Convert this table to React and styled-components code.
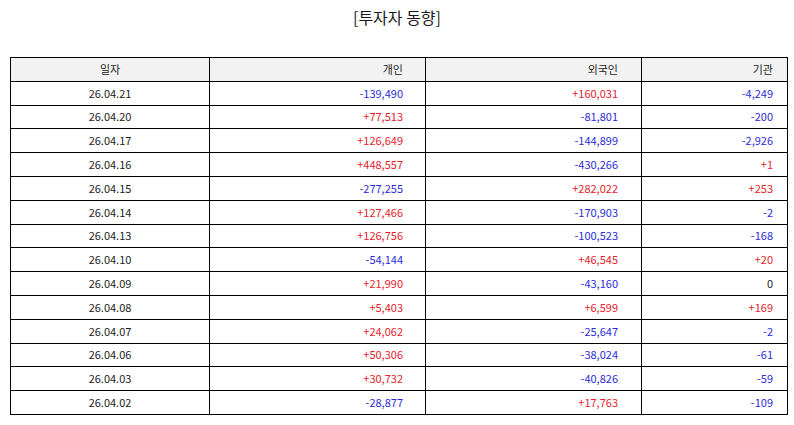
import React from 'react'
import styled, {createGlobalStyle} from 'styled-components';

const rows = [
    ['26.04.21', '-139,490', '+160,031', '-4,249'],
    ['26.04.20', '+77,513', '-81,801', '-200'],
    ['26.04.17', '+126,649', '-144,899', '-2,926'],
    ['26.04.16', '+448,557', '-430,266', '+1'],
    ['26.04.15', '-277,255', '+282,022', '+253'],
    ['26.04.14', '+127,466', '-170,903', '-2'],
    ['26.04.13', '+126,756', '-100,523', '-168'],
    ['26.04.10', '-54,144', '+46,545', '+20'],
    ['26.04.09', '+21,990', '-43,160', '0'],
    ['26.04.08', '+5,403', '+6,599', '+169'],
    ['26.04.07', '+24,062', '-25,647', '-2'],
    ['26.04.06', '+50,306', '-38,024', '-61'],
    ['26.04.03', '+30,732', '-40,826', '-59'],
    ['26.04.02', '-28,877', '+17,763', '-109'],
];

const columns = [
    {label: '일자', width: 199, align: 'center', pad: 0},
    {label: '개인', width: 216, align: 'right', pad: 22},
    {label: '외국인', width: 216, align: 'right', pad: 23},
    {label: '기관', width: 146, align: 'right', pad: 14},
];

const toneOf = (value) => {
    if (value.startsWith('+')) return 'up';
    if (value.startsWith('-')) return 'down';
    return 'flat';
};

const App = () => {
    return (
        <Page>
            <GlobalStyle/>
            <Title>[투자자 동향]</Title>
            <Table>
                <colgroup>
                    {columns.map((col) => <col key={col.label} style={{width: col.width}}/>)}
                </colgroup>
                <thead>
                <Row>
                    {columns.map((col) => (
                        <HeadCell key={col.label} $align={col.align} $pad={col.pad}>{col.label}</HeadCell>
                    ))}
                </Row>
                </thead>
                <tbody>
                {rows.map((row) => (
                    <Row key={row[0]}>
                        {row.map((value, i) => (
                            <Cell
                                key={i}
                                $align={columns[i].align}
                                $pad={columns[i].pad}
                                $tone={i === 0 ? 'flat' : toneOf(value)}>
                                {value}
                            </Cell>
                        ))}
                    </Row>
                ))}
                </tbody>
            </Table>
        </Page>
    )
}

const GlobalStyle = createGlobalStyle`
  html, body {
    margin: 0;
    background: #fff;
  }

  body {
    font-family: "Noto Sans CJK KR", "Noto Sans", sans-serif;
  }
`;

const Page = styled.div`
  width: 794px;
  height: 425px;
  padding: 0 0 0 10px;
  box-sizing: border-box;
`;

const Title = styled.div`
  height: 57px;
  margin-left: -10px;
  padding-top: 5px;
  box-sizing: border-box;
  text-align: center;
  font-size: 16px;
  color: #1a1a1a;
`;

const Table = styled.table`
  width: 777px;
  border-collapse: collapse;
  table-layout: fixed;
  font-size: 11px;
`;

const Row = styled.tr`
  height: 23.8px;
`;

const toneColors = {
    up: '#e5222b',
    down: '#2b2bdc',
    flat: '#222',
};

const Cell = styled.td`
  border: 1px solid #000;
  padding: 0 ${({$pad}) => $pad}px 0 0;
  text-align: ${({$align}) => $align};
  color: ${({$tone}) => toneColors[$tone]};
  line-height: 1;
`;

const HeadCell = styled(Cell).attrs({as: 'th'})`
  background: #f2f2f2;
  font-weight: normal;
  color: #222;
`;

export default App;
